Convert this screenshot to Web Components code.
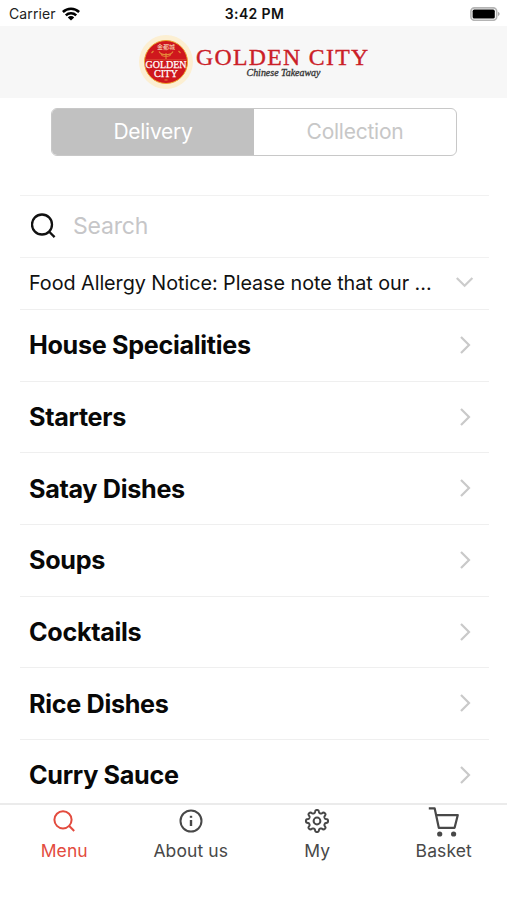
<!DOCTYPE html>
<html lang="en">
<head>
<meta charset="utf-8">
<meta name="viewport" content="width=device-width, initial-scale=1">
<title>Golden City</title>
<style>
  body {
    margin: 0;
    background: #fff;
    font-family: Inter, "Liberation Sans", sans-serif;
  }
</style>
</head>
<body>
<takeaway-app></takeaway-app>

<script>
  // Outline of the settings cog: eight rounded teeth around 0,0
  function cogPath() {
    let d = "";
    for (let i = 0; i < 144; i++) {
      const a = (i / 144) * Math.PI * 2;
      const r = 9.65 + 1.4 * Math.tanh(2 * Math.cos(8 * a)) / Math.tanh(2);
      d += (i ? "L" : "M") + (r * Math.sin(a)).toFixed(2) + " " + (-r * Math.cos(a)).toFixed(2);
    }
    return d + "Z";
  }

  const tabIcons = {
    search: `<circle cx="-1" cy="-1.2" r="8.6"/><path d="M5 4.8 10.2 10"/>`,
    info: `<circle r="10.5"/><path d="M0 -1V5" stroke-width="2.4"/><path d="M0 -5.2V-3.2" stroke-width="2.4"/>`,
    cog: `<path d="${cogPath()}"/><circle r="3.4"/>`,
    cart: `<path d="M-15.2 -12.6H-9.3L-5.2 6.8H10.6L13.8 -5.9H-8" stroke-width="2.2" stroke-linejoin="round"/><g fill="currentColor" stroke="none"><circle cx="-4.3" cy="13" r="2.6"/><circle cx="9.6" cy="13" r="2.6"/></g>`
  };

  class StatusBar extends HTMLElement {
    constructor() {
      super();
      this.attachShadow({ mode: "open" });
    }

    connectedCallback() {
      this.shadowRoot.innerHTML = `
        <style>
          :host {
            display: grid;
            grid-template-columns: 1fr auto 1fr;
            align-items: center;
            height: 26px;
            padding: 0 7px 0 9px;
            box-sizing: border-box;
            font-size: 14px;
            line-height: 28px;
            color: #222;
          }
          .carrier { display: flex; align-items: center; gap: 6px; letter-spacing: 0.1px; }
          .time { font-weight: 600; color: #111; letter-spacing: 0.35px; }
          .battery { justify-self: end; display: block; }
        </style>
        <div class="carrier"><span>Carrier</span>
          <svg width="18" height="14" viewBox="0 0 18 14" fill="none" stroke="#000" stroke-width="2.5">
            <path d="M.9 5A11.6 11.6 0 0 1 17.1 5"/>
            <path d="M3.8 8.3A7.4 7.4 0 0 1 14.2 8.3"/>
            <path d="M9 13.6 5.8 10.4A4.6 4.6 0 0 1 12.2 10.4Z" fill="#000" stroke="none"/>
          </svg>
        </div>
        <div class="time">3:42 PM</div>
        <svg class="battery" width="30" height="14" viewBox="0 0 30 14">
          <rect x=".9" y=".9" width="25.8" height="12.4" rx="3.5" fill="#fff" stroke="#b4b4b4" stroke-width="1.6"/>
          <rect x="2.6" y="2.6" width="22.2" height="9" rx="1.6" fill="#000"/>
          <path d="M28 4.8Q31.4 7 28 9.2Z" fill="#aaa"/>
        </svg>
      `;
    }
  }

  class BrandHeader extends HTMLElement {
    constructor() {
      super();
      this.attachShadow({ mode: "open" });
    }

    connectedCallback() {
      this.shadowRoot.innerHTML = `
        <style>
          :host {
            display: flex;
            justify-content: center;
            height: 72px;
            background: #f7f7f7;
          }
          svg { display: block; }
          text { font-family: "Liberation Serif", serif; }
        </style>
        <svg width="240" height="72" viewBox="134 26 240 72">
          <circle cx="166" cy="62" r="27" fill="#fcefd2"/>
          <circle cx="166" cy="62" r="21.5" fill="#cf171d" stroke="#eda32f" stroke-width="1"/>
          <text x="157" y="49" font-size="6" textLength="18" fill="#fbe3c5" style="font-family:'Noto Sans CJK TC',sans-serif">金都城</text>
          <g fill="none" stroke="#e58a38" stroke-width="1.1">
            <path d="M159 51.5Q161 55 166 54.5Q171 55 173 51.5M161 54.5Q163 57 166 56Q169 57 171 54.5"/>
            <path d="M166 53V59M151.5 53l2-2M180.5 53l-2-2M164.5 80h3"/>
          </g>
          <path d="M146 59.8H186" stroke="#df6b42" stroke-width=".6"/>
          <text x="145.5" y="68.2" font-size="9.6" textLength="41" lengthAdjust="spacingAndGlyphs" fill="#fff" stroke="#fff" stroke-width=".25">GOLDEN</text>
          <text x="154" y="77.3" font-size="10.5" textLength="24" lengthAdjust="spacingAndGlyphs" fill="#fff" stroke="#fff" stroke-width=".25">CITY</text>
          <text x="196" y="65" font-size="23.4" textLength="173.5" lengthAdjust="spacingAndGlyphs" fill="#cb2027" stroke="#cb2027" stroke-width=".35" letter-spacing="1.3">GOLDEN CITY</text>
          <text x="246.5" y="76.3" font-size="9.8" font-style="italic" textLength="74" lengthAdjust="spacingAndGlyphs" fill="#333" stroke="#333" stroke-width=".3">Chinese Takeaway</text>
        </svg>
      `;
    }
  }

  class SegmentSwitch extends HTMLElement {
    constructor() {
      super();
      this.attachShadow({ mode: "open" });
    }

    connectedCallback() {
      this.shadowRoot.innerHTML = `
        <style>
          :host {
            display: grid;
            grid-template-columns: 1fr 1fr;
            width: 406px;
            height: 48px;
            margin: 10px 0 39px 51px;
            box-sizing: border-box;
            border: 1.5px solid #c8c8c8;
            border-radius: 6px;
            overflow: hidden;
            font-size: 21px;
            line-height: 46px;
            letter-spacing: -0.25px;
            text-align: center;
          }
          .on { background: #c1c1c1; color: #fff; }
          .off { color: #c7c7c7; }
        </style>
        <div class="on"><slot name="first"></slot></div>
        <div class="off"><slot name="second"></slot></div>
      `;
    }
  }

  class SearchField extends HTMLElement {
    constructor() {
      super();
      this.attachShadow({ mode: "open" });
    }

    connectedCallback() {
      this.shadowRoot.innerHTML = `
        <style>
          :host {
            display: flex;
            align-items: center;
            gap: 16px;
            height: 62px;
            padding: 0 0 2px 11px;
            box-sizing: border-box;
            border-top: 1px solid #f1f1f1;
            font-size: 23px;
            letter-spacing: -0.2px;
            color: #c6c6c8;
          }
          svg { display: block; }
        </style>
        <svg width="26" height="26" viewBox="0 0 26 26" fill="none" stroke="#111" stroke-width="2.3">
          <circle cx="11" cy="11.5" r="10"/><path d="M18.2 18.7 23.6 24.1"/>
        </svg>
        <slot></slot>
      `;
    }
  }

  class AllergyNotice extends HTMLElement {
    constructor() {
      super();
      this.attachShadow({ mode: "open" });
    }

    connectedCallback() {
      this.shadowRoot.innerHTML = `
        <style>
          :host {
            display: flex;
            align-items: center;
            justify-content: space-between;
            height: 52px;
            padding: 0 15px 1px 9px;
            box-sizing: border-box;
            border-top: 1px solid #f1f1f1;
            font-size: 19.8px;
            letter-spacing: -0.05px;
            color: #111;
            white-space: nowrap;
          }
        </style>
        <slot></slot>
        <svg width="18" height="12" viewBox="0 0 18 12" fill="none" stroke="#ccc" stroke-width="2.2">
          <path d="M.8 1 8.6 8.8 16.4 1"/>
        </svg>
      `;
    }
  }

  class MenuRow extends HTMLElement {
    constructor() {
      super();
      this.attachShadow({ mode: "open" });
    }

    connectedCallback() {
      this.shadowRoot.innerHTML = `
        <style>
          :host {
            display: flex;
            align-items: center;
            justify-content: space-between;
            height: 71.7px;
            padding: 0 18px 0 9px;
            box-sizing: border-box;
            border-top: 1px solid #efefef;
            font-size: 25.2px;
            font-weight: 650;
            letter-spacing: -0.32px;
            color: #080808;
          }
          svg { margin-bottom: 1px; }
        </style>
        <slot></slot>
        <svg width="11" height="18" viewBox="0 0 11 18" fill="none" stroke="#c9c9c9" stroke-width="2.2">
          <path d="M1 1 9 9 1 17"/>
        </svg>
      `;
    }
  }

  class TabItem extends HTMLElement {
    constructor() {
      super();
      this.attachShadow({ mode: "open" });
    }

    connectedCallback() {
      const icon = tabIcons[this.getAttribute("icon")];
      this.shadowRoot.innerHTML = `
        <style>
          :host {
            display: flex;
            flex-direction: column;
            align-items: center;
            color: #484848;
            font-size: 17.5px;
            line-height: 24px;
            letter-spacing: 0.1px;
          }
          :host([active]) { color: #e34b3e; }
          svg { display: block; margin: -1px 0 1px; }
        </style>
        <svg width="34" height="34" viewBox="-17 -17 34 34" fill="none" stroke="currentColor" stroke-width="2">${icon}</svg>
        <slot></slot>
      `;
    }
  }

  class TabBar extends HTMLElement {
    constructor() {
      super();
      this.attachShadow({ mode: "open" });
    }

    connectedCallback() {
      this.shadowRoot.innerHTML = `
        <style>
          :host {
            display: grid;
            grid-template-columns: repeat(4, 1fr);
            align-content: start;
            height: 97px;
            padding-left: 1px;
            box-sizing: border-box;
            border-top: 2px solid #ebebeb;
            background: #fff;
          }
        </style>
        <slot></slot>
      `;
    }
  }

  class TakeawayApp extends HTMLElement {
    constructor() {
      super();
      this.attachShadow({ mode: "open" });
      this.categories = ["House Specialities", "Starters", "Satay Dishes", "Soups", "Cocktails", "Rice Dishes", "Curry Sauce"];
    }

    connectedCallback() {
      this.shadowRoot.innerHTML = `
        <style>
          :host {
            display: flex;
            flex-direction: column;
            width: 507px;
            height: 900px;
            overflow: hidden;
          }
          main { flex: 1; min-height: 0; overflow: hidden; }
          .list { margin: 0 18px 0 20px; }
        </style>
        <status-bar></status-bar>
        <brand-header></brand-header>
        <main>
          <segment-switch><span slot="first">Delivery</span><span slot="second">Collection</span></segment-switch>
          <div class="list">
            <search-field>Search</search-field>
            <allergy-notice>Food Allergy Notice: Please note that our ...</allergy-notice>
            ${this.categories.map((name) => `<menu-row>${name}</menu-row>`).join("")}
          </div>
        </main>
        <tab-bar>
          <tab-item icon="search" active>Menu</tab-item>
          <tab-item icon="info">About us</tab-item>
          <tab-item icon="cog">My</tab-item>
          <tab-item icon="cart">Basket</tab-item>
        </tab-bar>
      `;
    }
  }

  // Define Custom Elements
  customElements.define("status-bar", StatusBar);
  customElements.define("brand-header", BrandHeader);
  customElements.define("segment-switch", SegmentSwitch);
  customElements.define("search-field", SearchField);
  customElements.define("allergy-notice", AllergyNotice);
  customElements.define("menu-row", MenuRow);
  customElements.define("tab-item", TabItem);
  customElements.define("tab-bar", TabBar);
  customElements.define("takeaway-app", TakeawayApp);
</script>
</body>
</html>
